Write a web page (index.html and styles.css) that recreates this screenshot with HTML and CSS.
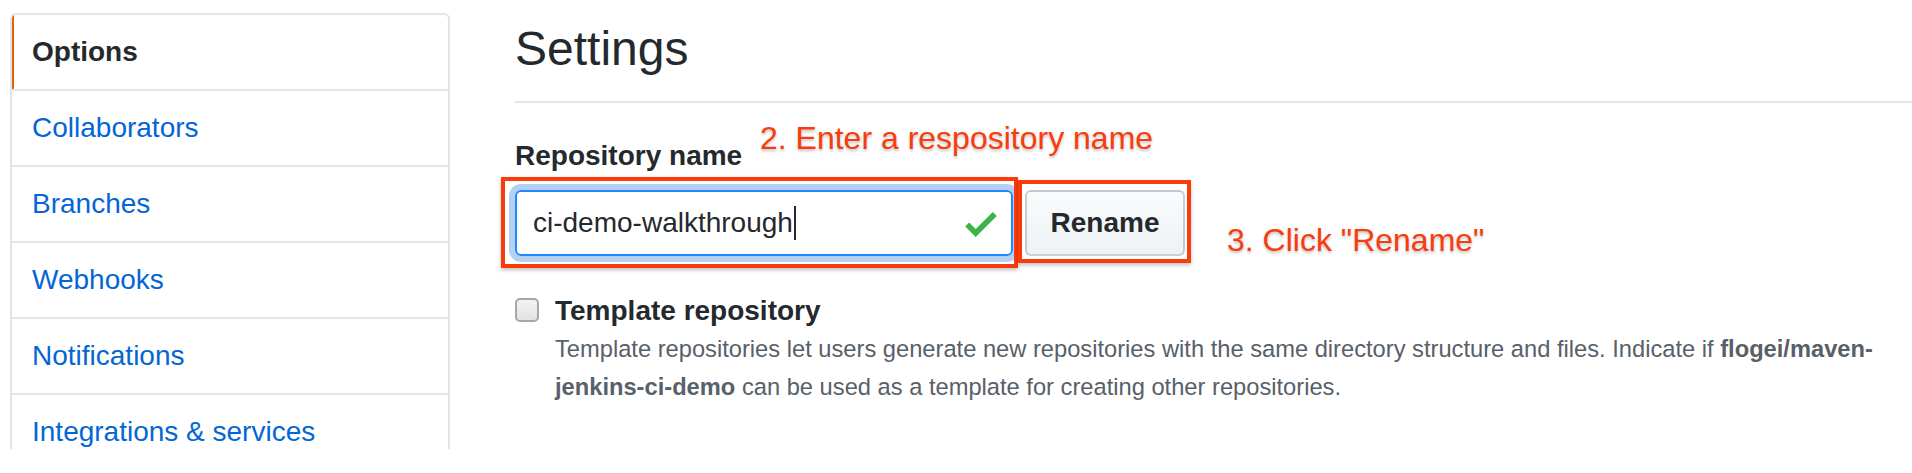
FILE: index.html
```html
<!DOCTYPE html>
<html lang="en">
<head>
<meta charset="utf-8">
<title>Settings</title>
<link rel="stylesheet" href="styles.css">
</head>
<body>
<div class="page">
  <nav class="menu">
    <a class="menu-item selected">Options</a>
    <a class="menu-item">Collaborators</a>
    <a class="menu-item">Branches</a>
    <a class="menu-item">Webhooks</a>
    <a class="menu-item">Notifications</a>
    <a class="menu-item">Integrations &amp; services</a>
  </nav>
  <main class="content">
    <h2 class="subhead">Settings</h2>
    <div class="form-group">
      <label class="label">Repository name</label>
      <div class="rename-row">
        <div class="input">
          <span class="input-text">ci-demo-walkthrough</span><span class="caret"></span>
          <svg class="check" viewBox="0 3.5 12 9.5" width="32" height="25"><path fill="#3bb54a" d="M12 5l-8 8-4-4 1.5-1.5L4 10l6.5-6.5L12 5z"/></svg>
        </div>
        <button class="btn">Rename</button>
      </div>
    </div>
    <div class="check-row">
      <span class="checkbox"></span>
      <div class="check-body">
        <div class="check-title">Template repository</div>
        <p class="note">Template repositories let users generate new repositories with the same directory structure and files. Indicate if <strong>flogei/maven-</strong><strong>jenkins-ci-demo</strong> can be used as a template for creating other repositories.</p>
      </div>
    </div>
  </main>
  <div class="annot annot-text-1">2. Enter a respository name</div>
  <div class="annot annot-text-2">3. Click "Rename"</div>
  <div class="annot-box annot-box-1"></div>
  <div class="annot-box annot-box-2"></div>
</div>
</body>
</html>
```
FILE: styles.css
```css
html, body {
  margin: 0;
  padding: 0;
  background: #fff;
}
body {
  font-family: "Liberation Sans", Arial, sans-serif;
  color: #24292e;
  overflow: hidden;
}
.page {
  position: relative;
  display: flex;
  align-items: flex-start;
  gap: 65px;
  padding: 13px 0 0 10px;
  height: 460px;
  box-sizing: border-box;
}
.menu {
  position: relative;
  width: 440px;
  flex: none;
  box-sizing: border-box;
  border: 2px solid #e1e4e8;
  border-bottom: none;
  border-radius: 6px 6px 0 0;
  height: 436px;
  overflow: hidden;
}
.menu-item {
  display: flex;
  align-items: center;
  height: 74px;
  border-bottom: 2px solid #e1e4e8;
  padding-left: 20px;
  font-size: 28px;
  color: #0366d6;
  text-decoration: none;
}
.menu-item.selected {
  position: relative;
  font-weight: bold;
  color: #24292e;
}
.menu-item.selected::before {
  content: "";
  position: absolute;
  left: -2px;
  top: -2px;
  bottom: 0;
  width: 4px;
  background: #e36209;
  border-top-left-radius: 6px;
}
.content {
  flex: 1;
  min-width: 0;
}
.subhead {
  margin: 0;
  font-size: 48px;
  font-weight: normal;
  line-height: 72px;
  padding-bottom: 16px;
  border-bottom: 2px solid #e1e4e8;
}
.form-group {
  margin-top: 32px;
}
.label {
  display: block;
  font-size: 28px;
  font-weight: bold;
  line-height: 42px;
  margin-bottom: 13px;
}
.rename-row {
  display: flex;
  gap: 12px;
}
.input {
  position: relative;
  width: 498px;
  height: 66px;
  box-sizing: border-box;
  border: 2px solid #2188ff;
  border-radius: 6px;
  box-shadow: 0 0 0 6px rgba(3, 102, 214, 0.3);
  display: flex;
  align-items: center;
  padding-left: 16px;
  font-size: 28px;
  color: #24292e;
}
.caret {
  display: inline-block;
  width: 2px;
  height: 34px;
  background: #24292e;
  margin-left: 1px;
}
.check {
  position: absolute;
  left: 448px;
  top: 20px;
}
.btn {
  width: 160px;
  height: 66px;
  box-sizing: border-box;
  border: 2px solid rgba(27, 31, 35, 0.2);
  border-radius: 6px;
  background: linear-gradient(#fafbfc, #eff3f6 90%);
  font-family: "Liberation Sans", Arial, sans-serif;
  font-size: 28px;
  font-weight: bold;
  color: #24292e;
  padding: 0;
}
.check-row {
  display: flex;
  gap: 16px;
  margin-top: 36px;
}
.checkbox {
  flex: none;
  width: 24px;
  height: 24px;
  margin-top: 6px;
  box-sizing: border-box;
  border: 2px solid #a4a7ab;
  border-radius: 5px;
  background: linear-gradient(#f4f4f4, #e2e2e2);
}
.check-title {
  font-size: 28px;
  font-weight: bold;
  line-height: 38px;
}
.note {
  margin: 0;
  font-size: 23.7px;
  line-height: 38px;
  color: #586069;
}
.note strong {
  color: #586069;
}
.annot {
  position: absolute;
  font-size: 32px;
  line-height: 40px;
  color: #fa3c0c;
  text-shadow: 0 2px 3px rgba(0, 0, 0, 0.25);
  white-space: nowrap;
}
.annot-text-1 {
  left: 760px;
  top: 118px;
}
.annot-text-2 {
  left: 1227px;
  top: 220px;
}
.annot-box {
  position: absolute;
  border: 4px solid #fa3c0c;
  box-shadow: 0 2px 4px rgba(0, 0, 0, 0.25);
  box-sizing: border-box;
}
.annot-box-1 {
  left: 501px;
  top: 177px;
  width: 517px;
  height: 91px;
}
.annot-box-2 {
  left: 1018px;
  top: 180px;
  width: 173px;
  height: 83px;
}
```
